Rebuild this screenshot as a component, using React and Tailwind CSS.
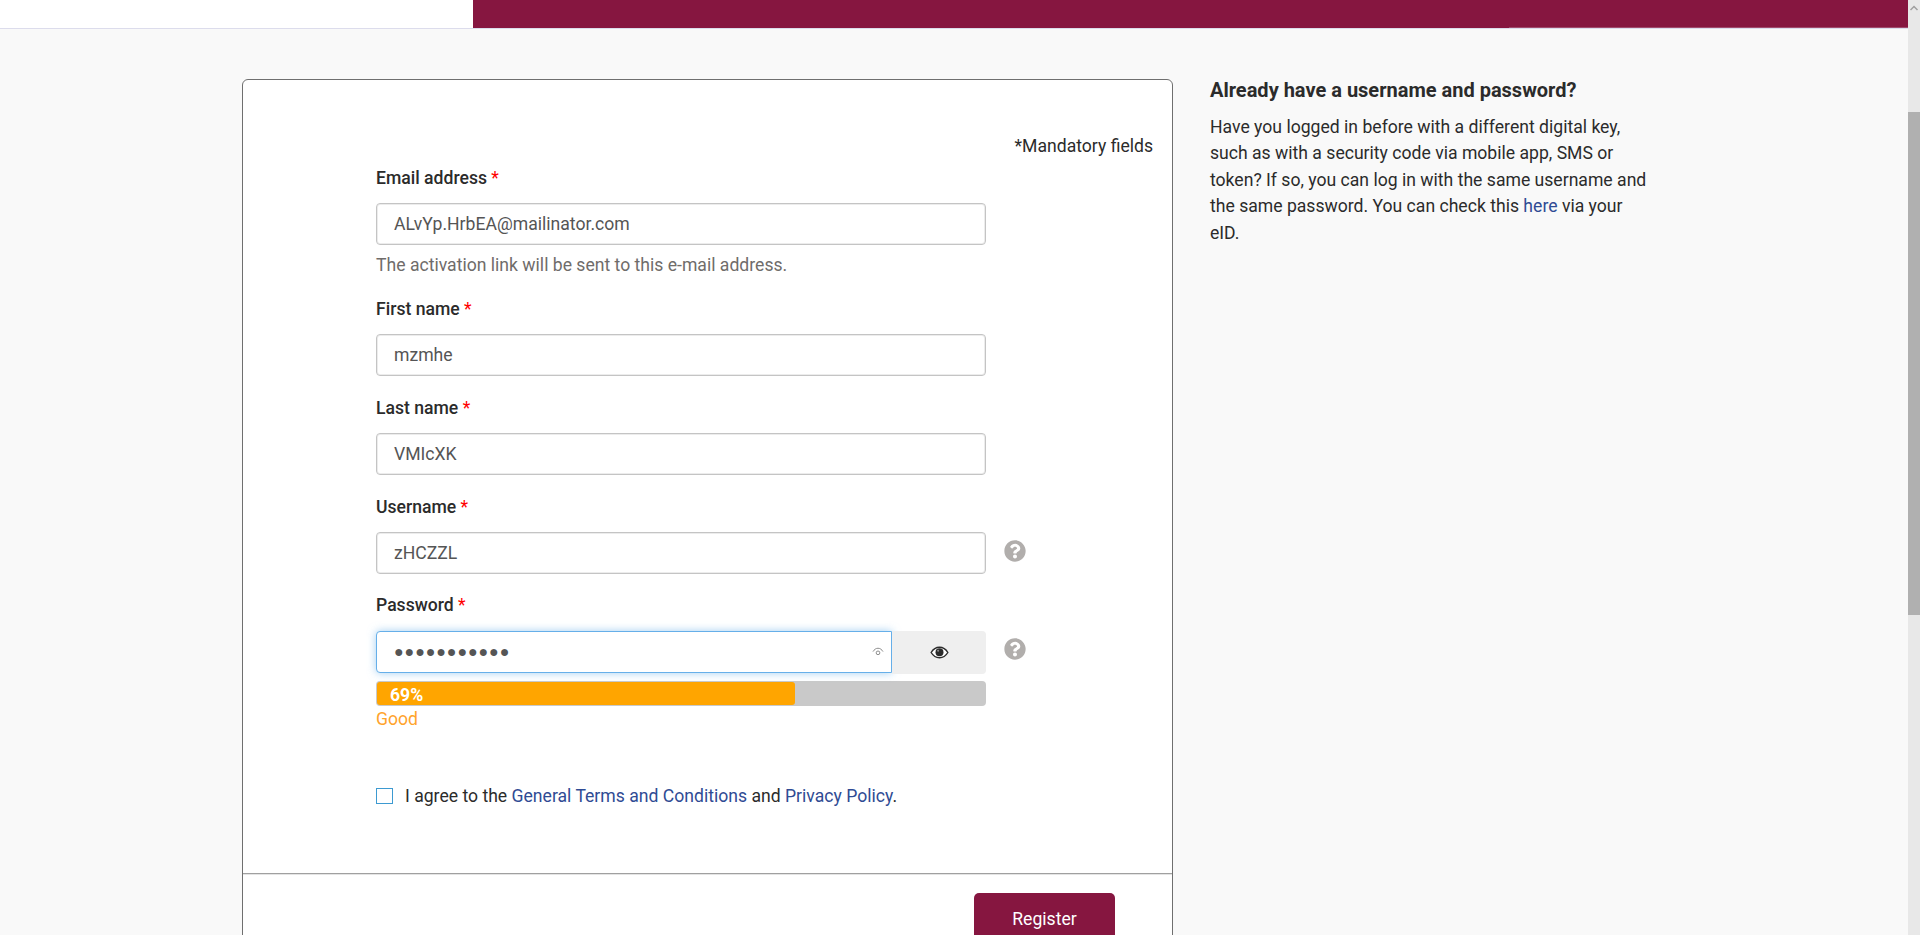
import { FaQuestionCircle } from "react-icons/fa";

const Req = () => <span className="text-[#ff0000] font-normal"> *</span>;

function Label({ children }) {
  return (
    <label className="block h-[24px] text-[17.6px] leading-[24px] font-medium text-[#2b2b2b]">
      {children}
      <Req />
    </label>
  );
}

function TextField({ value }) {
  return (
    <div className="mt-[13px] flex h-[42px] w-[610px] items-center rounded-[4px] border border-[#c4c4c4] bg-white px-[17px] text-[17.6px] text-[#555555] shadow-[inset_0_0_0_1px_#ececec]">
      {value}
    </div>
  );
}

function Help() {
  return <FaQuestionCircle className="h-[22px] w-[22px] text-[#b1aeac]" />;
}

function Eye() {
  return (
    <svg viewBox="0 0 20 14" className="h-[13px] w-[19px]">
      <path d="M1 7c2.200-3.600 5.200-5.600 9-5.600S16.800 3.400 19 7c-2.200 3.600-5.200 5.600-9 5.600S3.200 10.600 1 7z" fill="#ffffff" stroke="#2b2b2b" strokeWidth="1.500" />
      <circle cx="10" cy="6.800" r="4.300" fill="#2b2b2b" />
      <circle cx="8.500" cy="5.200" r="1.100" fill="#8a8a8a" />
    </svg>
  );
}

function SmallReveal() {
  return (
    <svg viewBox="0 0 14 12" className="h-[10px] w-[12px]" fill="none" stroke="#777777" strokeWidth="1">
      <path d="M1 5.500C2.500 3 4.500 1.500 7 1.500S11.500 3 13 5.500" />
      <circle cx="7" cy="7" r="2.200" />
    </svg>
  );
}

export default function App() {
  return (
    <div className="flex h-[935px] w-full overflow-hidden bg-[#f9f9f9] font-['Roboto',sans-serif]">
      <div className="min-w-0 flex-1">
        <header className="flex h-[29px] border-b border-[#dcdcec] bg-white">
          <div className="w-[473px]" />
          <div className="flex flex-1 items-end justify-end bg-[#861640]">
            <div className="h-[1px] w-[399px] bg-[#a04a6c]" />
          </div>
        </header>

        <main className="flex pl-[242px] pt-[50px]">
          <section className="h-[900px] w-[931px] shrink-0 rounded-[6px] border border-[#6f6f6f] bg-white">
            <div className="h-[793px] pl-[133px] pr-[19px] pt-[54px]">
              <p className="h-[24px] text-right text-[17.6px] leading-[24px] text-[#2b2b2b]">*Mandatory fields</p>
              <div className="mt-[8px]">
                <Label>Email address</Label>
                <TextField value="ALvYp.HrbEA@mailinator.com" />
                <p className="mt-[8px] h-[24px] text-[17.6px] leading-[24px] text-[#6f6c6a]">The activation link will be sent to this e-mail address.</p>
              </div>
              <div className="mt-[20px]">
                <Label>First name</Label>
                <TextField value="mzmhe" />
              </div>
              <div className="mt-[20px]">
                <Label>Last name</Label>
                <TextField value="VMIcXK" />
              </div>
              <div className="mt-[20px]">
                <Label>Username</Label>
                <div className="flex items-start">
                  <TextField value="zHCZZL" />
                  <div className="ml-[18px] mt-[21px]"><Help /></div>
                </div>
              </div>
              <div className="mt-[19px]">
                <Label>Password</Label>
                <div className="mt-[14px] flex items-start">
                  <div className="flex w-[610px]">
                    <div className="flex h-[42px] flex-1 items-center justify-between rounded-l-[4px] border border-[#66afe9] bg-white pl-[17px] pr-[7px] text-[#555555] shadow-[0_0_8px_rgba(102,175,233,0.6)]">
                      <span className="text-[16px] tracking-[0.9px]">●●●●●●●●●●●</span>
                      <SmallReveal />
                    </div>
                    <div className="flex h-[43px] w-[94px] items-center justify-center rounded-r-[4px] bg-[#efefef]">
                      <Eye />
                    </div>
                  </div>
                  <div className="ml-[18px] mt-[7px]"><Help /></div>
                </div>
                <div className="mt-[7px] h-[25px] w-[610px] rounded-[4px] bg-[#c9c9c9] pb-[1px] pl-[1px] pt-[1px]">
                  <div className="h-[23px] w-[418px] rounded-[3px] bg-[#ffa500] pl-[13px] text-[17.6px] font-bold leading-[27px] text-white">69%</div>
                </div>
                <p className="mt-[1px] h-[24px] text-[17.6px] leading-[24px] text-[#ffa32b]">Good</p>
              </div>
              <div className="mt-[53px] flex items-center gap-[12px] text-[17.6px] leading-[24px] text-[#2b2b2b]">
                <span className="h-[16px] w-[17px] border border-[#3d9ad1] bg-white" />
                <p>
                  I agree to the <span className="text-[#2f4b94]">General Terms and Conditions</span> and <span className="text-[#2f4b94]">Privacy Policy</span>.
                </p>
              </div>
            </div>
            <div className="flex h-[106px] justify-end border-t border-[#a0a0a0] pr-[57px] pt-[19px] shadow-[inset_0_1px_0_#e4e4e4]">
              <button className="h-[52px] w-[141px] rounded-[5px] bg-[#861640] text-[17.6px] text-white">Register</button>
            </div>
          </section>

          <aside className="ml-[37px] w-[440px] text-[#2b2b2b]">
            <h2 className="text-[20px] font-bold leading-[22px]">Already have a username and password?</h2>
            <p className="mt-[13px] w-[440px] text-[17.6px] leading-[26.4px]">
              Have you logged in before with a different digital key, such as with a security code via mobile app, SMS or token? If so, you can log in with the same username and the same password. You can check this <span className="text-[#2f4b94]">here</span> via your eID.
            </p>
          </aside>
        </main>
      </div>

      <div className="h-full w-[12px] shrink-0 bg-[#e8e8e8] pt-[5px]">
        <svg viewBox="0 0 12 6" className="h-[6px] w-[12px]" fill="none" stroke="#a0a0a0" strokeWidth="1.500">
          <path d="M2.500 5L6 1.500 9.500 5" />
        </svg>
        <div className="mt-[101px] h-[503px] w-full bg-[#b0b0b0]" />
      </div>
    </div>
  );
}
